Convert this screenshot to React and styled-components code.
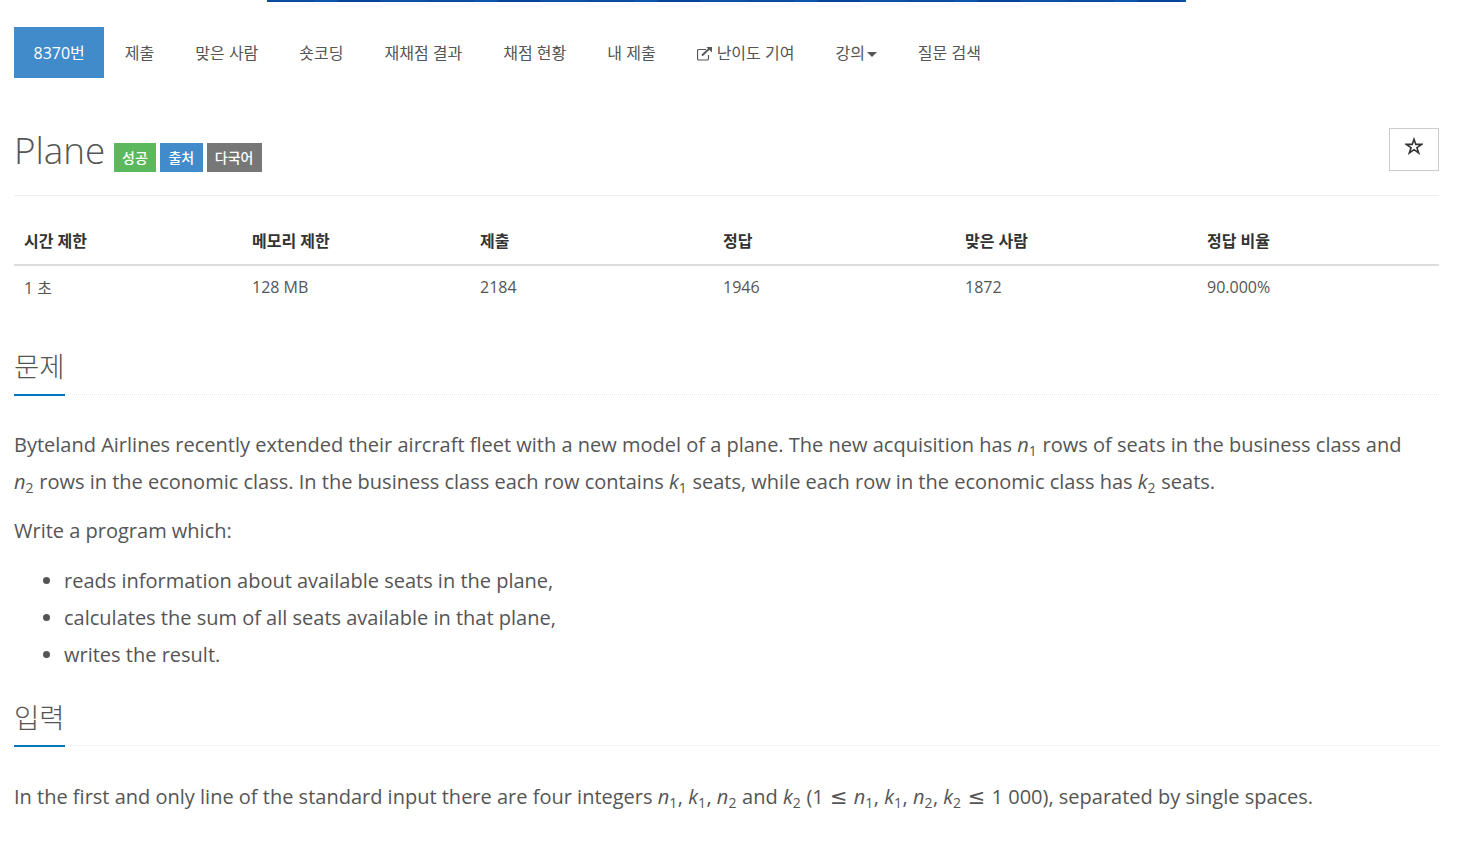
import styled, { createGlobalStyle } from 'styled-components';

const GlobalStyle = createGlobalStyle`
  html, body {
    margin: 0;
    padding: 0;
    background: #fff;
  }
  body {
    font-family: "Open Sans", "Noto Sans CJK KR", sans-serif;
    color: #555;
  }
`;

const Page = styled.div`
  box-sizing: border-box;
  width: 1425px;
  margin-left: 14px;
`;

const Banner = styled.div`
  width: 919px;
  height: 2px;
  margin: 0 auto 25px;
  background: repeating-linear-gradient(90deg, #0a4a9f 0 47px, #0d55ab 47px 71px, #07429a 71px 113px, #0c50a6 113px 160px);
`;

const Nav = styled.nav`
  display: flex;
  height: 51px;
  margin-bottom: 50px;
`;

const Tab = styled.a`
  display: flex;
  align-items: center;
  padding: 1px ${(p) => (p.$active ? 19.5 : 20.5)}px 0;
  font-size: 16px;
  line-height: 50px;
  color: ${(p) => (p.$active ? '#fff' : '#555')};
  background: ${(p) => (p.$active ? '#428bca' : 'transparent')};
`;

const LinkIcon = styled.svg`
  width: 17px;
  height: 15px;
  margin-right: 3px;
  fill: none;
  stroke: #555;
`;

const Caret = styled.span`
  display: inline-block;
  margin-left: 2px;
  margin-top: 3px;
  border-top: 5px solid #555;
  border-left: 5px solid transparent;
  border-right: 5px solid transparent;
`;

const TitleRow = styled.div`
  display: flex;
  align-items: flex-start;
  justify-content: space-between;
  height: 67px;
  border-bottom: 1px solid #eee;
`;

const TitleGroup = styled.div`
  display: flex;
  align-items: flex-end;
  height: 44px;
`;

const Title = styled.h1`
  margin: 0 8.5px 0 0;
  font-size: 36.8px;
  font-weight: 300;
  line-height: 43px;
  color: #555;
`;

const Label = styled.span`
  display: block;
  margin-right: 4px;
  padding: 0 8.3px;
  font-size: 14px;
  font-weight: 500;
  line-height: 29px;
  color: #fff;
  background: ${(p) => p.$color};
`;

const StarButton = styled.button`
  display: flex;
  align-items: center;
  justify-content: center;
  box-sizing: border-box;
  width: 50px;
  height: 43px;
  padding: 0 0 7px;
  border: 1px solid #ccc;
  background: #fff;
`;

const StarIcon = styled.svg`
  width: 18px;
  height: 18px;
  fill: none;
  stroke: #333;
  stroke-width: 1.6;
`;

const InfoTable = styled.table`
  width: 1425px;
  margin-top: 20px;
  border-collapse: collapse;
  table-layout: fixed;
  font-size: 16px;
`;

const Th = styled.th`
  height: 48px;
  padding: 0 10px;
  border-bottom: 2px solid #ddd;
  color: #333;
  font-size: 16px;
  font-weight: 700;
  text-align: left;
`;

const Td = styled.td`
  height: 41px;
  padding: 0 10px;
  color: #555;
`;

const Section = styled.section`
  margin-top: ${(p) => p.$top}px;
`;

const Heading = styled.div`
  height: 48px;
  border-bottom: 1px dotted #e6e6ee;
`;

const HeadingText = styled.h2`
  display: inline-block;
  box-sizing: border-box;
  height: 50px;
  margin: 0;
  border-bottom: 2px solid #0076c0;
  font-size: 27.5px;
  font-weight: 300;
  line-height: 42px;
  color: #555;
`;

const Body = styled.div`
  margin-top: ${(p) => p.$top}px;
  font-size: 20px;
  line-height: 37px;
  color: #555;
`;

const Paragraph = styled.p`
  margin: 0 0 12px;
`;

const List = styled.ul`
  margin: 13px 0 0;
  padding-left: 50px;
`;

const Var = styled.i`
  font-style: italic;
`;

const Sub = styled.sub`
  margin-right: 0.5px;
  font-size: 14px;
  line-height: 0;
  vertical-align: -4px;
`;

const Leq = styled.span`
  margin: 0 1px;
  font-family: "DejaVu Sans", sans-serif;
  font-size: 21px;
  line-height: 0;
`;

const M = ({ v, n }) => (
  <span>
    <Var>{v}</Var>
    {n && <Sub>{n}</Sub>}
  </span>
);

const tabs = ['제출', '맞은 사람', '숏코딩', '재채점 결과', '채점 현황', '내 제출'];
const heads = ['시간 제한', '메모리 제한', '제출', '정답', '맞은 사람', '정답 비율'];
const cells = ['1 초', '128 MB', '2184', '1946', '1872', '90.000%'];
const widths = [228, 228, 243, 242, 242, 242];

export default function App() {
  return (
    <Page>
      <GlobalStyle />
      <Banner />
      <Nav>
        <Tab $active>8370번</Tab>
        {tabs.map((t) => (
          <Tab key={t}>{t}</Tab>
        ))}
        <Tab>
          <LinkIcon viewBox="1 0 17 15">
            <path d="M10 3.5H3a1.5 1.5 0 0 0-1.5 1.5v7.5A1.5 1.5 0 0 0 3 14h8a1.5 1.5 0 0 0 1.5-1.5V9" strokeWidth="1.2" />
            <path d="M6 9.5 14 2" strokeWidth="1.8" />
            <path d="M10.5 1h5.5v5.5z" fill="#555" stroke="none" />
          </LinkIcon>
          난이도 기여
        </Tab>
        <Tab>
          강의
          <Caret />
        </Tab>
        <Tab>질문 검색</Tab>
      </Nav>

      <TitleRow>
        <TitleGroup>
          <Title>Plane</Title>
          <Label $color="#5cb85c">성공</Label>
          <Label $color="#428bca">출처</Label>
          <Label $color="#777">다국어</Label>
        </TitleGroup>
        <StarButton>
          <StarIcon viewBox="0 0 18 18">
            <path d="M9 2.2 10.8 7.4H16.6L11.9 10.7 13.7 16 9 12.7 4.3 16 6.1 10.7 1.4 7.4H7.2Z" />
          </StarIcon>
        </StarButton>
      </TitleRow>

      <InfoTable>
        <colgroup>
          {widths.map((w, i) => (
            <col key={i} width={w} />
          ))}
        </colgroup>
        <thead>
          <tr>
            {heads.map((h) => (
              <Th key={h}>{h}</Th>
            ))}
          </tr>
        </thead>
        <tbody>
          <tr>
            {cells.map((c) => (
              <Td key={c}>{c}</Td>
            ))}
          </tr>
        </tbody>
      </InfoTable>

      <Section $top={39}>
        <Heading>
          <HeadingText>문제</HeadingText>
        </Heading>
        <Body $top={31}>
          <Paragraph>
            Byteland Airlines recently extended their aircraft fleet with a new model of a plane. The new
            acquisition has <M v="n" n="1" /> rows of seats in the business class and
            <br />
            <M v="n" n="2" /> rows in the economic class. In the business class each row contains{' '}
            <M v="k" n="1" /> seats, while each row in the economic class has <M v="k" n="2" /> seats.
          </Paragraph>
          <Paragraph>Write a program which:</Paragraph>
          <List>
            <li>reads information about available seats in the plane,</li>
            <li>calculates the sum of all seats available in that plane,</li>
            <li>writes the result.</li>
          </List>
        </Body>
      </Section>

      <Section $top={24}>
        <Heading>
          <HeadingText>입력</HeadingText>
        </Heading>
        <Body $top={32}>
          <Paragraph>
            In the first and only line of the standard input there are four integers <M v="n" n="1" />,{' '}
            <M v="k" n="1" />, <M v="n" n="2" /> and <M v="k" n="2" /> (1 <Leq>≤</Leq> <M v="n" n="1" />,{' '}
            <M v="k" n="1" />, <M v="n" n="2" />, <M v="k" n="2" /> <Leq>≤</Leq> 1 000), separated by single spaces.
          </Paragraph>
        </Body>
      </Section>
    </Page>
  );
}
